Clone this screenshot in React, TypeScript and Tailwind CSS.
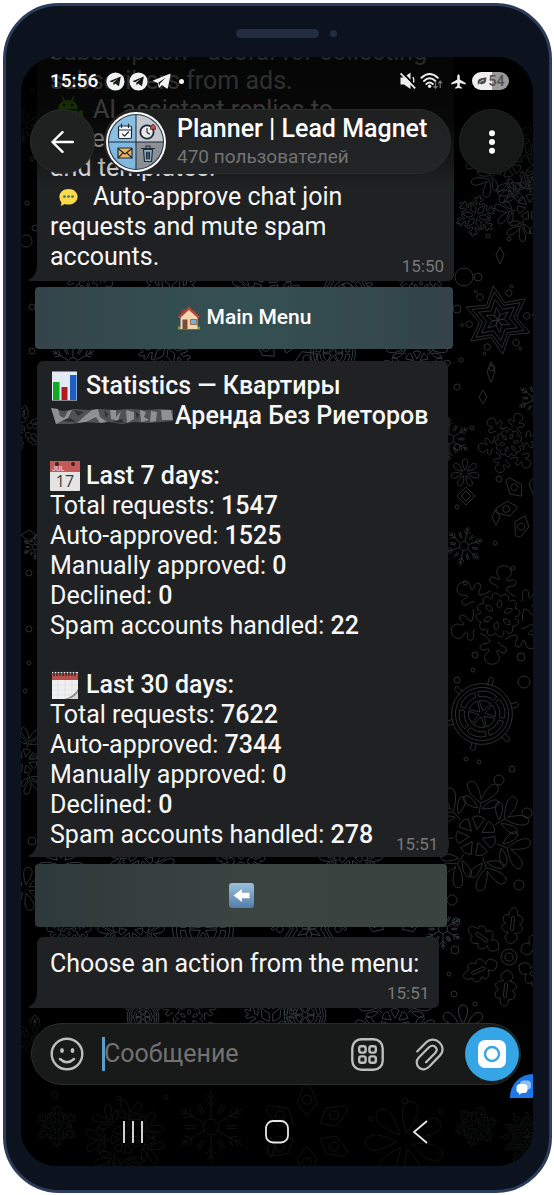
import type { ReactNode } from "react";

/* ---------- wallpaper ---------- */

type FlakeKind = "frost" | "star" | "petal" | "twig" | "blob" | "wheel" | "leaf" | "oak" | "diamond";

// one arm pointing up, on a radius of 100, and how many times it goes round
const ARMS: Record<FlakeKind, { count: number; d: string; ring?: number[] }> = {
  frost: {
    count: 6,
    d: "M-6-12V-38L-26-52Q-36-60-28-66L-6-54V-66L-18-76Q-24-84-16-88L-6-82Q-6-100 0-100Q6-100 6-82L16-88Q24-84 18-76L6-66V-54L28-66Q36-60 26-52L6-38V-12",
  },
  star: {
    count: 6,
    d: "M-26-45L0-96L26-45M-22-38L0-78L22-38M-16-28L0-58L16-28M-8-14L0-36L8-14L0 0Z M40-70m-9 0a9 9 0 1 0 18 0a9 9 0 1 0-18 0M50-87m-4 0a4 4 0 1 0 8 0a4 4 0 1 0-8 0",
  },
  petal: { count: 7, d: "M0-20C-28-70-22-100 0-100C22-100 28-70 0-20" },
  twig: {
    count: 6,
    d: "M0-24V-100M0-78l-10-12M0-78l10-12M0-60l-16-18M0-60l16-18M18-38l14-26M-18-38l-14-26",
    ring: [22],
  },
  blob: {
    count: 6,
    d: "M-9-55C-10-66-32-60-27-74C-20-82-12-70-8-74C-8-82-19-84-14-96C-8-106 8-106 14-96C19-84 8-82 8-74C12-70 20-82 27-74C32-60 10-66 9-55Q18-46 31-43M0-38C-8-50-22-44-16-32M0-38C8-50 22-44 16-32M0-14C-7-20-6-28 0-32C6-28 7-20 0-14",
  },
  wheel: {
    count: 6,
    d: "M-6-78V-96Q0-104 6-96V-78M-26-54Q0-68 26-54L20-42Q0-52-20-42ZM-16-32Q0-40 16-32L0-8Z",
    ring: [80, 70],
  },
  leaf: {
    count: 7,
    d: "M0-40V-60C-14-66-34-84-26-94C-14-102-6-84 0-66C6-84 14-102 26-94C34-84 14-66 0-60M-4-50C-16-50-34-56-32-66C-26-74-12-64-4-50M4-50C16-50 34-56 32-66C26-74 12-64 4-50M-11-32Q0-40 11-32L0-12Z",
  },
  oak: {
    count: 6,
    d: "M0-26C-16-34-14-44-6-48C-22-50-26-62-14-66C-24-74-20-86-9-84C-8-104 8-104 9-84C20-86 24-74 14-66C26-62 22-50 6-48C14-44 16-34 0-26M-3-54V-80Q0-84 3-80V-54Q0-50-3-54",
    ring: [16, 8],
  },
  diamond: { count: 6, d: "M0-34L-22-60L-8-96Q0-104 8-96L22-60ZM0-68m-10 0a10 10 0 1 0 20 0a10 10 0 1 0-20 0" },
};

const FLAKES: [FlakeKind, number, number, number, number][] = [
  ["frost", 455, 159, 21, 10],
  ["leaf", 509, 150, 36, 0],
  ["star", 477, 263, 36, -8],
  ["twig", 515, 342, 19, 5],
  ["blob", 488, 386, 30, 20],
  ["petal", 444, 416, 14, 0],
  ["diamond", 508, 448, 34, 20],
  ["twig", 443, 489, 20, 12],
  ["blob", 477, 558, 48, 8],
  ["wheel", 461, 657, 38, 15],
  ["leaf", 455, 779, 56, 8],
  ["oak", 488, 900, 50, 6],
  ["leaf", 486, 105, 42, 20],
  ["twig", 428, 382, 22, 0],
  ["twig", 2, 68, 18, 0],
  ["oak", 0, 372, 24, 10],
  ["twig", 14, 490, 13, 0],
  ["leaf", 4, 704, 34, 10],
  ["petal", 4, 832, 22, 10],
  ["oak", 14, 982, 24, 0],
  ["frost", 36, 1069, 21, 0],
  ["leaf", 104, 1082, 40, 10],
  ["twig", 190, 1070, 36, 0],
  ["diamond", 286, 1074, 46, 0],
  ["petal", 384, 1084, 40, 10],
  ["frost", 455, 1069, 21, 15],
  ["star", 506, 1080, 26, 0],
];

const BAND_FLAKES: [FlakeKind, number, number, number, number][] = [
  ["blob", 66, 234, 26, 10],
  ["frost", 150, 238, 28, 0],
  ["leaf", 245, 228, 34, 5],
  ["wheel", 325, 236, 28, 10],
  ["blob", 400, 232, 26, 0],
  ["twig", 52, 306, 24, 0],
  ["frost", 146, 288, 30, 10],
  ["diamond", 262, 308, 36, 15],
  ["wheel", 312, 296, 28, 0],
  ["leaf", 396, 306, 34, 0],
  ["petal", 40, 806, 24, 0],
  ["leaf", 120, 800, 34, 8],
  ["oak", 220, 810, 30, 0],
  ["leaf", 330, 800, 32, 0],
  ["blob", 48, 882, 24, 0],
  ["leaf", 110, 872, 34, 0],
  ["wheel", 182, 872, 38, 0],
  ["star", 288, 872, 36, 0],
  ["diamond", 372, 878, 32, 0],
  ["twig", 422, 872, 20, 0],
  ["wheel", 122, 960, 20, 0],
  ["blob", 168, 962, 30, 0],
  ["frost", 250, 968, 30, 0],
  ["wheel", 284, 958, 26, 0],
  ["leaf", 374, 966, 40, 0],
  ["petal", 442, 972, 24, 0],
];

const DOTS: [number, number, number][] = [
  [467, 179, 2], [488, 182, 2], [443, 220, 9], [457, 220, 4], [436, 252, 4], [471, 311, 3],
  [440, 303, 2], [436, 330, 3], [436, 390, 3], [451, 371, 2], [478, 422, 3], [436, 450, 2],
  [474, 486, 2], [492, 511, 2], [444, 526, 2], [454, 598, 3], [500, 600, 4], [452, 613, 2],
  [436, 623, 3], [503, 625, 6], [445, 702, 2], [458, 705, 2], [491, 712, 3], [478, 723, 5],
  [506, 756, 5], [498, 828, 5], [431, 843, 5], [435, 865, 4], [427, 882, 2], [434, 893, 4],
  [428, 917, 2], [433, 937, 3], [454, 947, 2], [11, 33, 2], [11, 102, 2], [6, 146, 2],
  [5, 184, 6], [14, 171, 3], [11, 250, 3], [11, 294, 3], [8, 516, 3], [8, 572, 3],
  [8, 606, 2], [4, 634, 2], [11, 700, 2], [11, 784, 4], [34, 1038, 3], [98, 1041, 2],
  [145, 1040, 2], [420, 1055, 2], [350, 1062, 2], [384, 1044, 3],
];

const Flake = ({ kind, x, y, r, turn }: { kind: FlakeKind; x: number; y: number; r: number; turn: number }) => {
  const { count, d, ring } = ARMS[kind];
  return (
    <g transform={`translate(${x} ${y}) rotate(${turn}) scale(${r / 100})`}>
      {Array.from({ length: count }, (_, i) => (
        <path key={i} d={d} transform={`rotate(${(360 / count) * i})`} vectorEffect="non-scaling-stroke" />
      ))}
      {ring?.map((radius) => (
        <circle key={radius} r={radius} vectorEffect="non-scaling-stroke" />
      ))}
    </g>
  );
};

const Wallpaper = () => (
  <svg
    className="absolute inset-0 h-full w-full"
    viewBox="0 0 512 1109"
    preserveAspectRatio="xMidYMid slice"
    fill="none"
    strokeWidth="1"
    strokeLinejoin="round"
    aria-hidden="true"
  >
    <g stroke="#2b2f31">
      {FLAKES.map(([kind, x, y, r, turn], i) => (
        <Flake key={i} kind={kind} x={x} y={y} r={r} turn={turn} />
      ))}
      {DOTS.map(([x, y, r], i) => (
        <circle key={i} cx={x} cy={y} r={r} />
      ))}
      <path d="M479 190l4 8-4 9-4-9zM470 305l4 10-4 10-4-10zM462 333l4 7-4 7-4-7zM445 430l9 9-9 9-9-9zM445 434l5 5-5 5-5-5zM475 452l4 8-4 8-4-8zM0 478l8-5 8 5-7 7zM250 1080l4 10-4 10-4-10z" />
    </g>
    <g stroke="#333d3f">
      {BAND_FLAKES.map(([kind, x, y, r, turn], i) => (
        <Flake key={i} kind={kind} x={x} y={y} r={r} turn={turn} />
      ))}
    </g>
  </svg>
);

/* ---------- icons ---------- */

const TelegramRound = () => (
  <svg className="h-[19px] w-[19px]" viewBox="0 0 20 20" aria-hidden="true">
    <circle cx="10" cy="10" r="9.5" fill="#f2f2f2" />
    <path d="M3.6 9.7L15.6 4.8L13.6 15L9.7 12.2L8 14L7.6 11.2L12.6 7.2L6.4 10.8Z" fill="#151515" />
  </svg>
);

const TelegramPlane = () => (
  <svg className="h-[17px] w-[19px]" viewBox="0 0 20 18" aria-hidden="true">
    <path d="M0.5 8.2L18.8 0.8Q19.8 0.6 19.6 1.8L16.8 15.6Q16.4 17 15 16.2L10.4 12.8L8 15.4Q7.2 16 7 15L6 10.6Z" fill="#f2f2f2" />
    <path d="M6.6 10.4L14.6 4.8L8.4 11.2L7.8 13.6Z" fill="#111" />
  </svg>
);

const MuteIcon = () => (
  <svg className="h-[18px] w-[16px]" viewBox="0 0 16 18" aria-hidden="true">
    <path d="M0.5 5.5H4L10.5 0.5V17L4 12.5H0.5Z" fill="#ededed" />
    <path d="M13 5Q14.6 8 13.4 11" stroke="#ededed" strokeWidth="1.4" fill="none" />
    <path d="M1.6 0L16.2 14.6" stroke="#050505" strokeWidth="2" />
    <path d="M0.6 1.4L15.2 16.4" stroke="#ededed" strokeWidth="1.8" />
  </svg>
);

const WifiIcon = () => (
  <svg className="h-[18px] w-[23px]" viewBox="0 0 23 18" fill="none" aria-hidden="true">
    <g stroke="#ededed" strokeWidth="1.9" strokeLinecap="round">
      <path d="M1.5 5.8Q9.5 -1.6 17.8 5.8" />
      <path d="M4 9Q9.6 3.6 15.4 9" />
      <path d="M6.4 12Q9.6 9 12.8 12" />
    </g>
    <circle cx="9.6" cy="14.2" r="1.7" fill="#ededed" />
    <path d="M15.5 9V16M13.4 14l2.1 2.2L17.6 14M20.2 16V9.4M18.2 11.4l2-2.2l2 2.2" stroke="#777" strokeWidth="1.2" />
  </svg>
);

const AirplaneIcon = () => (
  <svg className="h-[15px] w-[15px]" viewBox="0 0 15 15" aria-hidden="true">
    <path d="M7.5 0.2Q8.8 0.5 8.8 2.4V5.4L14.7 9V10.6L8.8 8.9V12L10.8 13.6V14.8L7.5 14L4.2 14.8V13.6L6.2 12V8.9L0.3 10.6V9L6.2 5.4V2.4Q6.2 0.5 7.5 0.2Z" fill="#ededed" />
  </svg>
);

const LeafIcon = () => (
  <svg className="h-[10px] w-[10px]" viewBox="0 0 10 10" aria-hidden="true">
    <path d="M1 8Q-0.4 3.4 4.4 2.2L9.4 1.2Q9.6 8.4 4.4 8.2Q3 8.2 2 7.6L0.8 9.4" fill="#4a4a4a" />
    <path d="M2.4 6.8Q4.4 4.4 7 4" stroke="#e6e6e6" strokeWidth="0.8" fill="none" />
  </svg>
);

const ChannelAvatar = () => (
  <svg className="h-[60px] w-[60px] shrink-0" viewBox="0 0 60 60" aria-hidden="true">
    <defs>
      <clipPath id="avatarClip">
        <circle cx="30" cy="30" r="27" />
      </clipPath>
    </defs>
    <circle cx="30" cy="30" r="30" fill="#fdfdfd" />
    <circle cx="30" cy="30" r="28" fill="#22303c" />
    <g clipPath="url(#avatarClip)">
      <path d="M0 0H30V30H0Z" fill="#88bfe2" />
      <path d="M30 0H60V30H30Z" fill="#c3c6cc" />
      <path d="M0 30H30V60H0Z" fill="#7fb8e0" />
      <path d="M30 30H60V60H30Z" fill="#8c8f95" />
      <path d="M30 0V60M0 30H60" stroke="#1c2b38" strokeWidth="1" />
    </g>
    <g stroke="#202b36" strokeWidth="1.2" strokeLinecap="round" strokeLinejoin="round">
      <rect x="12.5" y="14" width="13" height="12.5" rx="1.5" fill="#f4f8fb" />
      <path d="M12.5 18H25.5M15.500 12V15.500M22.500 12V15.500" />
      <path d="M16.5 22.200l2 2l4-4.200" fill="none" />
      <circle cx="41" cy="20" r="6.6" fill="#e8eaee" strokeWidth="1.8" strokeDasharray="5 1" />
      <path d="M41 16.500V20.500L43.500 22" fill="none" />
      <path d="M44.500 17Q44.500 12.500 47 12.500T49.500 17Z" fill="#d94a3d" strokeWidth="0.8" />
      <rect x="12" y="36" width="14" height="10" rx="0.8" fill="#f0b45a" />
      <path d="M12 36.500L19 42L26 36.500M12 46L17 41M26 46L21 41" fill="none" />
      <path d="M37.500 37.500H46.500L45.500 49.500H38.500Z" fill="#8fb4cf" />
      <path d="M35.500 36.500H48.500M40 35.500V34H44V35.500M40.500 40V47M42 40V47M43.500 40V47" fill="none" />
    </g>
  </svg>
);

const AndroidEmoji = () => (
  <svg className="mx-[3px] inline-block h-[30px] w-[30px]" viewBox="0 0 30 30" fill="#5cc41c" aria-hidden="true">
    <path d="M5 14Q6 5 15 5T25 14ZM5 15.500H25V28H5Z" />
    <rect x="0" y="15" width="4" height="11" rx="2" />
    <rect x="26" y="15" width="4" height="11" rx="2" />
    <path d="M9 1L12 7M21 1L18 7" stroke="#5cc41c" strokeWidth="1.5" />
    <circle cx="11" cy="10" r="1.3" fill="#111" />
    <circle cx="19" cy="10" r="1.3" fill="#111" />
  </svg>
);

const SpeechEmoji = () => (
  <svg className="mr-[15px] ml-[9px] inline-block h-[19px] w-[19px] align-[-2px]" viewBox="0 0 20 20" aria-hidden="true">
    <path d="M10 1C15.500 1 19.600 4.600 19.600 9.200S15.500 17.400 10 17.400Q7.600 17.400 5.600 16.800Q4 18.600 1.600 18.800Q3 17 2.400 15Q0.400 12.600 0.400 9.200C0.400 4.600 4.500 1 10 1Z" fill="#fbd94b" />
    <g fill="#2a7f8c">
      <circle cx="5.8" cy="9" r="1.5" />
      <circle cx="10" cy="9" r="1.5" />
      <circle cx="14.2" cy="9" r="1.5" />
    </g>
  </svg>
);

const HouseEmoji = () => (
  <svg className="h-[24px] w-[24px]" viewBox="0 0 24 24" aria-hidden="true">
    <path d="M1 20.500H23V23.500H1Z" fill="#6fa043" />
    <path d="M4 3H8V9H4Z" fill="#8c3b31" />
    <path d="M3.500 10L12 2.500L20.500 10V23H3.500Z" fill="#f0d6b2" />
    <path d="M12 0.500L23 10.800L21.400 12.600L12 4L2.600 12.600L1 10.800Z" fill="#b9443a" />
    <path d="M5.500 13.500H10.500V23H5.500Z" fill="#7d4a35" />
    <path d="M13.500 13.500H19.500V18.500H13.500Z" fill="#6fb6e6" stroke="#a06a45" strokeWidth="1" />
  </svg>
);

const ChartEmoji = () => (
  <svg className="h-[30px] w-[30px]" viewBox="0 0 30 30" aria-hidden="true">
    <rect x="2" y="0.5" width="25" height="29" fill="#e3eaf4" />
    <rect x="3" y="11" width="6.5" height="18" fill="#0fab22" />
    <rect x="11.5" y="16" width="6" height="13" fill="#b41a1e" />
    <rect x="20" y="4" width="6.5" height="25" fill="#1f5fc4" />
  </svg>
);

const CalendarEmoji = () => (
  <svg className="h-[30px] w-[30px]" viewBox="0 0 30 30" aria-hidden="true">
    <rect width="30" height="30" rx="1" fill="#e4e4e4" />
    <path d="M1 0H29Q30 0 30 1V11H0V1Q0 0 1 0Z" fill="#c45a58" />
    <circle cx="7" cy="3" r="2" fill="#3a2020" />
    <circle cx="23" cy="3" r="2" fill="#3a2020" />
    <text x="2" y="10" fontFamily="Roboto, sans-serif" fontSize="7" fill="#f2d5d5">JUL</text>
    <text x="15" y="26" textAnchor="middle" fontFamily="Open Sans, sans-serif" fontSize="16" fill="#3a3a3a">17</text>
  </svg>
);

const SpiralEmoji = () => (
  <svg className="h-[30px] w-[30px]" viewBox="0 0 30 30" aria-hidden="true">
    <path d="M2 2H28V29H2Z" fill="#f0f0f0" />
    <path d="M2 3H28V10H2Z" fill="#b9504c" />
    <path d="M4 0V6M7 0V6M10 0V6M13 0V6M16 0V6M19 0V6M22 0V6M25 0V6" stroke="#2b2b2b" strokeWidth="1.4" />
    <path d="M2 15H28M2 20H28M2 25H28M8 10V29M15 10V29M22 10V29" stroke="#dcdcdc" strokeWidth="0.6" />
    <path d="M28 19Q24 26 15 29H28Z" fill="#8b8b8b" />
    <path d="M28 22Q24 28 18 29H28Z" fill="#d9d9d9" />
  </svg>
);

const LeftArrowEmoji = () => (
  <svg className="h-[25px] w-[25px]" viewBox="0 0 25 25" aria-hidden="true">
    <defs>
      <linearGradient id="arrowTile" x1="0" y1="0" x2="0" y2="1">
        <stop offset="0" stopColor="#9cc0dc" />
        <stop offset="1" stopColor="#527ea8" />
      </linearGradient>
    </defs>
    <rect width="25" height="25" rx="3" fill="url(#arrowTile)" />
    <path d="M4.500 12.500L13 6V9.800H20.500V15.200H13V19Z" fill="#fff" />
  </svg>
);

// name of the district, painted over
const Smudge = () => (
  <svg className="h-[20px] w-[125px] shrink-0" viewBox="0 0 125 20" aria-hidden="true">
    <path d="M2 3L14 5L24 3L38 4L50 3L64 4L80 3L96 4L110 3L123 4V15L112 16L98 17L84 16L72 18L58 16L48 17L34 16L22 18L6 18Z" fill="#505152" />
    <path d="M1 2L8 3L10 10L14 12L18 5L22 4L18 12L6 18ZM42 4L48 3L50 11L57 16L50 17L46 11L36 16L27 17L36 9ZM60 4L66 4V11L71 5L68 15L61 13ZM76 4L84 6L84 13L77 17ZM90 4L96 6L94 11L99 14L91 16ZM101 5L107 6L106 15L100 16ZM111 4H121L123 14L112 14Z" fill="#8f9091" />
    <path d="M24 4L34 6L28 10ZM54 4L58 8L56 12ZM85 5L89 8L87 13ZM12 15L20 12L26 16ZM62 16L72 13L74 17Z" fill="#2e2f30" />
  </svg>
);

/* ---------- chat pieces ---------- */

const Time = ({ children }: { children: ReactNode }) => (
  <span className="-mr-2.5 text-[17px] leading-[12px] text-[#77787a]">{children}</span>
);

const Bubble = ({ children, className }: { children: ReactNode; className: string }) => (
  <div className={`relative ml-4 rounded-md bg-[#202122] pr-5 pl-[13px] text-[25px] leading-[30px] whitespace-nowrap text-[#f7f7f7] ${className}`}>
    <svg className="absolute bottom-0 -left-2 h-4 w-[14px]" viewBox="0 0 14 16" aria-hidden="true">
      <path d="M8 0Q8 11 0 14.500V16H14V0Z" fill="#202122" />
    </svg>
    {children}
  </div>
);

const StatLine = ({ label, value }: { label: string; value: string }) => (
  <div>
    {label}: <b className="font-medium">{value}</b>
  </div>
);

const StatHeading = ({ icon, children }: { icon: ReactNode; children: ReactNode }) => (
  <div className="flex items-center gap-1.5 font-medium">
    {icon}
    {children}
  </div>
);

const App = () => {
  return (
    <div className="bg-white pt-[3px] pr-0.5 pb-0.5 pl-[3px] font-[Roboto,'Noto_Sans',sans-serif]">
      <div className="rounded-[56px] border-[3px] border-[#2b3d5b] bg-[#0d131e] pr-4 pb-6 pl-[15px]">
        <div className="flex h-[51px] items-center justify-center gap-[11px] pt-1 pl-[18px]">
          <div className="h-[9px] w-[83px] rounded-full bg-[#222d40]" />
          <div className="h-[7px] w-[7px] rounded-full bg-[#222d40]" />
        </div>

        <div className="relative flex flex-col overflow-hidden rounded-[36px] bg-black">
          <Wallpaper />

          <main className="relative flex flex-col items-start">
            <div className="-mt-5 flex flex-col">
              <Bubble className="min-w-[417px] pb-[9px]">
                <p className="leading-[29px]">
                  subscription - useful for collecting
                  <br />
                  subscribers from ads.
                </p>
                <p className="leading-[29px]">
                  <span className="inline-flex h-[29px] items-center align-top">
                    <AndroidEmoji />
                    <span className="ml-[7px]">AI assistant replies to</span>
                  </span>
                  <br />
                  write rules
                  <br />
                  and templates.
                </p>
                <p>
                  <SpeechEmoji />
                  Auto-approve chat join
                  <br />
                  requests and mute spam
                </p>
                <div className="flex items-end justify-between">
                  <span>accounts.</span>
                  <Time>15:50</Time>
                </div>
              </Bubble>
              <button className="mt-1.5 mr-px ml-[14px] flex h-[62px] items-center justify-center gap-1.5 rounded bg-linear-to-r from-[#33454a] via-[#345053] to-[#334349] text-[21px] font-medium text-white">
                <HouseEmoji />
                Main Menu
              </button>
            </div>

            <div className="mt-3 flex flex-col">
              <Bubble className="pt-2.5 pb-[7px]">
                <StatHeading icon={<ChartEmoji />}>Statistics — Квартиры</StatHeading>
                <div className="flex items-center font-medium">
                  <Smudge />
                  Аренда Без Риеторов
                </div>
                <div className="mt-[30px]">
                  <StatHeading icon={<CalendarEmoji />}>Last 7 days:</StatHeading>
                  <StatLine label="Total requests" value="1547" />
                  <StatLine label="Auto-approved" value="1525" />
                  <StatLine label="Manually approved" value="0" />
                  <StatLine label="Declined" value="0" />
                  <StatLine label="Spam accounts handled" value="22" />
                </div>
                <div className="mt-[29px]">
                  <StatHeading icon={<SpiralEmoji />}>Last 30 days:</StatHeading>
                  <StatLine label="Total requests" value="7622" />
                  <StatLine label="Auto-approved" value="7344" />
                  <StatLine label="Manually approved" value="0" />
                  <StatLine label="Declined" value="0" />
                  <div className="flex items-end justify-between">
                    <StatLine label="Spam accounts handled" value="278" />
                    <Time>15:51</Time>
                  </div>
                </div>
              </Bubble>
              <button
                className="mt-[7px] mr-px ml-[14px] flex h-[63px] items-center justify-center rounded bg-linear-to-r from-[#2e393c] via-[#3b4441] to-[#39433f]"
                aria-label="Back"
              >
                <LeftArrowEmoji />
              </button>
            </div>

            <Bubble className="mt-2.5 flex flex-col pt-3 pb-[9px]">
              Choose an action from the menu:
              <div className="mt-2 flex justify-end">
                <Time>15:51</Time>
              </div>
            </Bubble>
          </main>

          <footer className="relative mt-[15px]">
            <div className="absolute inset-0 bg-black/60" />
            <div className="relative mr-3 ml-2.5 flex h-[62px] items-center rounded-full border border-[#2b2c2c] bg-[#181919] pr-px pl-[18px]">
              <button aria-label="Emoji">
                <svg className="h-[34px] w-[34px]" viewBox="0 0 34 34" fill="none" stroke="#bdbdbd" strokeWidth="2.4" aria-hidden="true">
                  <circle cx="17" cy="17" r="15.3" />
                  <path d="M10 22Q17 28.500 24 22" strokeLinecap="round" />
                  <ellipse cx="12" cy="13.5" rx="1.9" ry="2.5" fill="#bdbdbd" stroke="none" />
                  <ellipse cx="22.5" cy="13.5" rx="1.9" ry="2.5" fill="#bdbdbd" stroke="none" />
                </svg>
              </button>
              <div className="ml-[18px] h-[34px] w-[3px] bg-[#5c9dc9]" />
              <input
                className="-ml-px min-w-0 flex-1 bg-transparent text-[25px] text-white outline-none placeholder:text-[#727272]"
                type="text"
                placeholder="Сообщение"
                aria-label="Сообщение"
              />
              <button aria-label="Bot commands">
                <svg className="h-[33px] w-[33px]" viewBox="0 0 33 33" fill="none" stroke="#bdbdbd" strokeWidth="2.4" aria-hidden="true">
                  <rect x="1.3" y="1.3" width="30.4" height="30.4" rx="9" />
                  <rect x="8.2" y="8.2" width="6.4" height="6.4" rx="2" />
                  <rect x="18.4" y="8.2" width="6.4" height="6.4" rx="2" />
                  <rect x="8.2" y="18.4" width="6.4" height="6.4" rx="2" />
                  <rect x="18.4" y="18.4" width="6.4" height="6.4" rx="2" />
                </svg>
              </button>
              <button className="ml-[31px]" aria-label="Attach">
                <svg className="h-[33px] w-[29px]" viewBox="0 0 29 33" fill="none" stroke="#bdbdbd" strokeWidth="2.2" strokeLinecap="round" aria-hidden="true">
                  <path d="M2.200 13.400L10.800 4.700C14.200 1 20.200 0.600 24.200 4.200C28.400 8 28.600 13.800 25 17.400L14.400 28.400C11.600 31.800 7 32.400 4 29.600C1 26.800 0.900 22.400 3.800 19.400L14 9.200C16 7.400 18.800 7.400 20.400 9C22 10.600 22 13 20.200 15L11 24.200" />
                </svg>
              </button>
              <button className="ml-[21px] flex h-[54px] w-[54px] items-center justify-center rounded-full bg-[#35a5e6]" aria-label="Camera">
                <svg className="h-[28px] w-[28px]" viewBox="0 0 28 28" aria-hidden="true">
                  <rect width="28" height="28" rx="7" fill="#fff" />
                  <circle cx="14" cy="14" r="7" fill="none" stroke="#35a5e6" strokeWidth="2.4" />
                </svg>
              </button>
            </div>

            <nav className="relative grid h-[81px] grid-cols-3 items-center justify-items-center px-10 pt-[13px]">
              <button aria-label="Recents">
                <svg className="h-[24px] w-[24px]" viewBox="0 0 24 24" stroke="#e8e8e8" strokeWidth="1.8" aria-hidden="true">
                  <path d="M3 1V23M12 1V23M21 1V23" />
                </svg>
              </button>
              <button aria-label="Home">
                <svg className="h-[24px] w-[24px]" viewBox="0 0 24 24" fill="none" stroke="#e8e8e8" strokeWidth="1.8" aria-hidden="true">
                  <rect x="1" y="1" width="22" height="21.5" rx="7" />
                </svg>
              </button>
              <button aria-label="Back">
                <svg className="h-[24px] w-[24px]" viewBox="0 0 24 24" fill="none" stroke="#e8e8e8" strokeWidth="1.8" aria-hidden="true">
                  <path d="M18 1L5 12L18 23" />
                </svg>
              </button>
            </nav>

            {/* floating chat widget, cut off by the edge of the screen */}
            <div className="absolute right-0 bottom-[68px] flex h-[24px] w-[23px] items-center justify-center rounded-tl-full bg-[#1b77ea] pt-1 pl-1">
              <svg className="h-[16px] w-[16px]" viewBox="0 0 16 16" aria-hidden="true">
                <rect x="4" y="0.5" width="11" height="9" rx="3.5" fill="#8fbdf5" />
                <rect x="0.5" y="4" width="11" height="9" rx="3.5" fill="#fff" />
                <path d="M3 12V15L7 12Z" fill="#fff" />
              </svg>
            </div>
          </footer>

          {/* status bar and chat header lie over the message list */}
          <header className="absolute inset-x-0 top-0 h-[130px] bg-linear-to-b from-black/85 via-black/75 to-transparent">
            <div className="flex h-12 items-center justify-between pr-6 pl-[29px]">
              <div className="flex items-center gap-1 text-white">
                <span className="mr-1 text-[19px] font-medium">15:56</span>
                <TelegramRound />
                <TelegramRound />
                <TelegramPlane />
                <span className="ml-1 h-[5px] w-[5px] rounded-full bg-[#f2f2f2]" />
              </div>
              <div className="flex items-center gap-1">
                <MuteIcon />
                <WifiIcon />
                <span className="ml-1">
                  <AirplaneIcon />
                </span>
                <div className="ml-0.5 flex h-[18px] w-[37px] items-center justify-center gap-0.5 rounded-full bg-linear-to-r from-[#efefef] from-54% to-[#9a9a9a] to-54% text-[14px] font-semibold text-[#555]">
                  <LeafIcon />
                  54
                </div>
              </div>
            </div>

            <div className="mt-1 flex items-center px-[9px]">
              <button
                className="flex h-[65px] w-[65px] shrink-0 items-center justify-center rounded-full border border-[#2a2b2b] bg-[#1f2121]"
                aria-label="Back"
              >
                <svg className="h-[22px] w-[23px]" viewBox="0 0 23 22" fill="none" stroke="#fff" strokeWidth="2.4" strokeLinecap="round" strokeLinejoin="round" aria-hidden="true">
                  <path d="M22 11H1.500M11.500 1.200L1.500 11L11.500 20.800" />
                </svg>
              </button>
              <div className="ml-[9px] flex h-[65px] flex-1 items-center rounded-full border border-[#2a2b2b] bg-linear-to-b from-[#1f2020] to-[#232425] pl-px">
                <ChannelAvatar />
                <div className="ml-[11px] whitespace-nowrap">
                  <h1 className="text-[25px] leading-[30px] font-medium text-white">Planner | Lead Magnet</h1>
                  <p className="text-[19px] leading-[26px] text-[#727375]">470 пользователей</p>
                </div>
              </div>
              <button
                className="ml-2 flex h-[65px] w-[65px] shrink-0 items-center justify-center rounded-full border border-[#222323] bg-[#161717]"
                aria-label="More"
              >
                <svg className="h-[24px] w-[6px]" viewBox="0 0 6 24" fill="#fff" aria-hidden="true">
                  <circle cx="3" cy="3.2" r="3" />
                  <circle cx="3" cy="12" r="3" />
                  <circle cx="3" cy="20.8" r="3" />
                </svg>
              </button>
            </div>
          </header>
        </div>
      </div>
    </div>
  );
};

export default App;
